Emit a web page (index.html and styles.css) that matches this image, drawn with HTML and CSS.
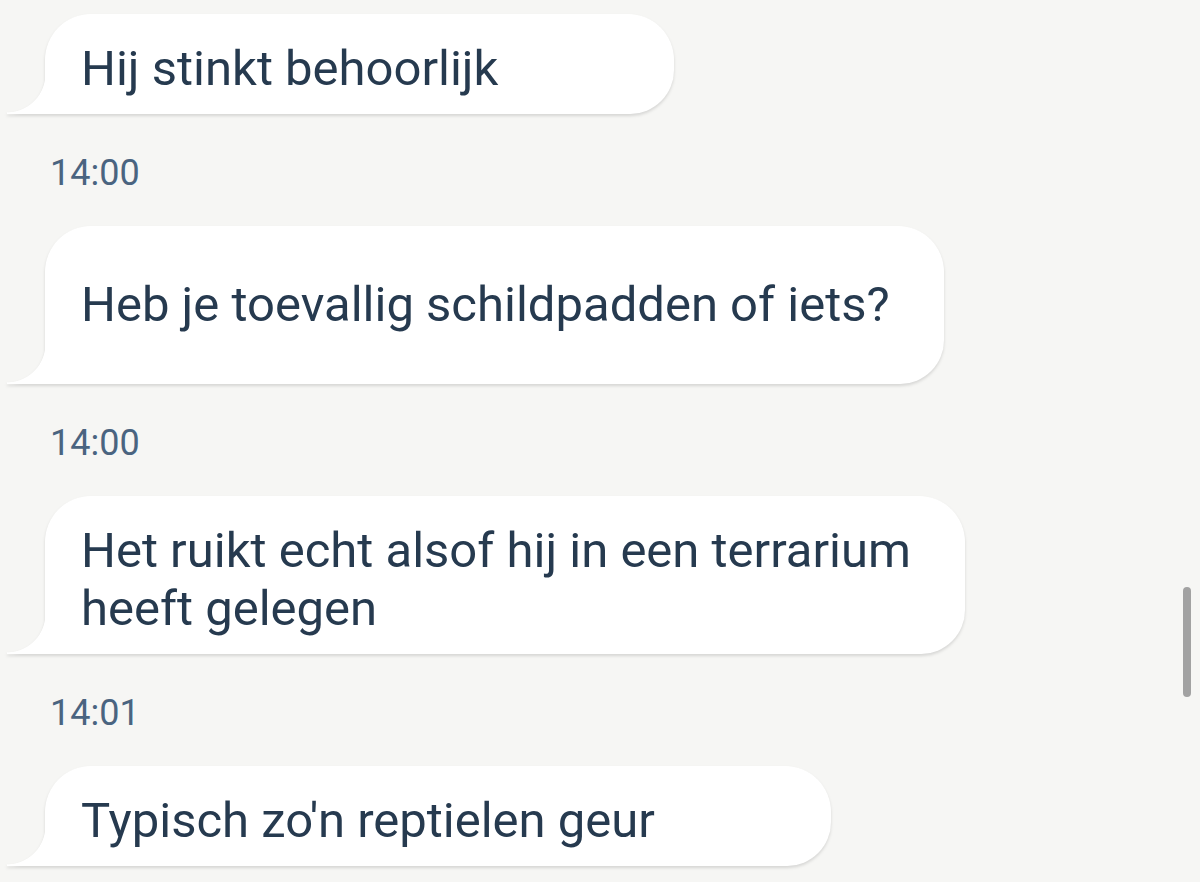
FILE: index.html
```html
<!DOCTYPE html>
<html lang="nl">
<head>
<meta charset="utf-8">
<title>Chat</title>
<link rel="stylesheet" href="styles.css">
</head>
<body>
<main class="chat">
  <div class="bubble bubble--wide-right">Hij stinkt behoorlijk</div>
  <div class="time">14:00</div>
  <div class="bubble bubble--tall">Heb je toevallig schildpadden of iets?</div>
  <div class="time">14:00</div>
  <div class="bubble">Het ruikt echt alsof hij in een terrarium heeft gelegen</div>
  <div class="time">14:01</div>
  <div class="bubble bubble--wide-right">Typisch zo'n reptielen geur</div>
</main>
<div class="scrollbar"></div>
</body>
</html>
```
FILE: styles.css
```css
html, body {
  margin: 0;
  padding: 0;
  background: #f6f6f4;
  height: 100%;
  overflow: hidden;
}
body {
  font-family: Roboto, "Noto Sans", "Liberation Sans", sans-serif;
  color: #263a4f;
}
.chat {
  display: flex;
  flex-direction: column;
  align-items: flex-start;
  padding: 14px 0 0 45px;
}
.bubble {
  position: relative;
  box-sizing: border-box;
  max-width: 920px;
  background: #ffffff;
  font-size: 49px;
  line-height: 58px;
  padding: 26px 50px 16px 36px;
  border-radius: 46px 46px 44px 0;
  filter: drop-shadow(0 2px 1.5px rgba(0, 0, 0, 0.13));
}
.bubble::before {
  content: "";
  position: absolute;
  left: -38px;
  bottom: 0;
  width: 39px;
  height: 40px;
  background: radial-gradient(circle at 0 0, transparent 38px, #ffffff 38.8px);
}
.bubble--tall {
  padding-top: 50px;
  padding-bottom: 50px;
  padding-right: 54px;
}
.bubble--wide-right {
  padding-right: 176px;
}
.time {
  font-size: 36px;
  line-height: 42px;
  color: #4a6480;
  margin: 38px 0 32px 5px;
}
.scrollbar {
  position: absolute;
  left: 1183px;
  top: 587px;
  width: 8px;
  height: 110px;
  border-radius: 4px;
  background: #a2a2a2;
}
```
